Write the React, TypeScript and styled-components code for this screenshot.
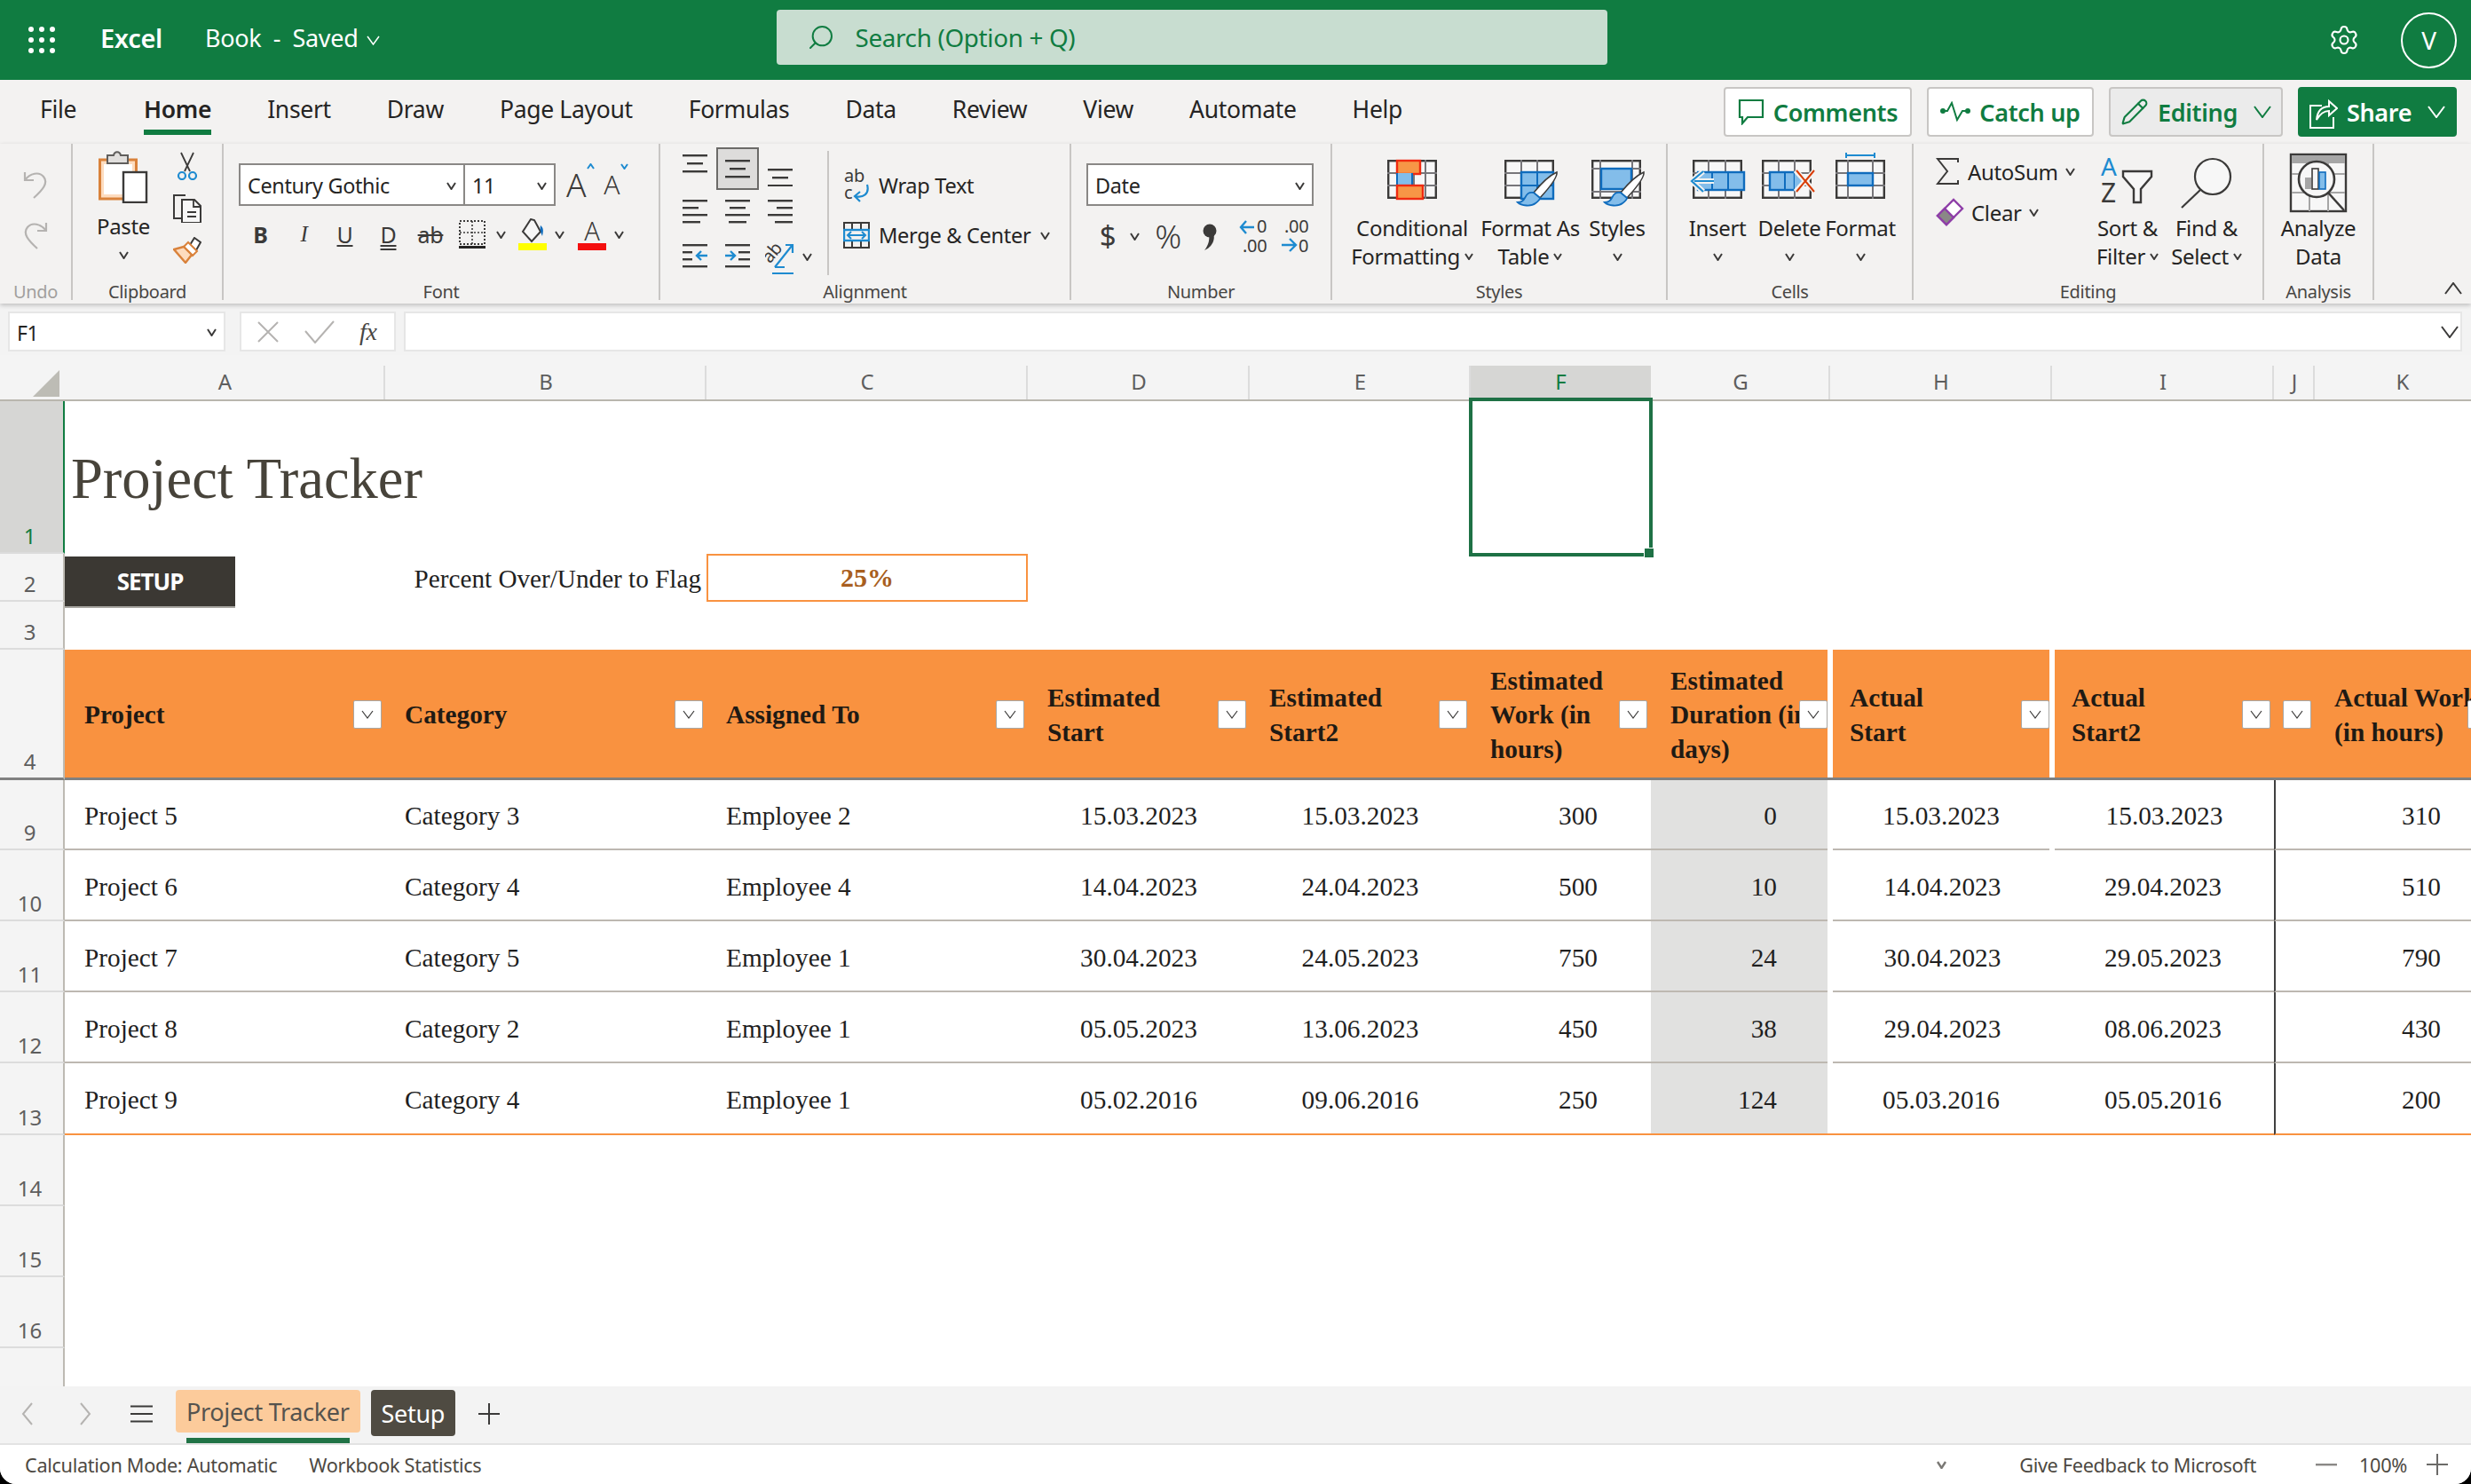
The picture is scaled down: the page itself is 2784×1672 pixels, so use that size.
import React, { FC, ReactNode } from 'react';
import styled, { createGlobalStyle } from 'styled-components';
import { Settings, Search, Pencil } from 'lucide-react';

const uiFont = '"Noto Sans", "Open Sans", sans-serif';
const sheetFont = '"Liberation Serif", serif';
const green = '#107c41';
const orange = '#f99240';

const GlobalStyle = createGlobalStyle`
    html, body {
        margin: 0;
        padding: 0;
        background: #000;
    }
    * {
        box-sizing: border-box;
    }
`;

const Page = styled.div`
    width: 2784px;
    height: 1672px;
    background: #fff;
    overflow: hidden;
    display: flex;
    flex-direction: column;
    font-family: ${uiFont};
    color: #252423;
    letter-spacing: -0.02em;
    border-radius: 0 0 18px 18px;
`;

/* title bar */
const TitleBar = styled.header`
    height: 90px;
    flex: none;
    background: ${green};
    color: #fff;
    display: flex;
    align-items: center;
    padding: 0 16px 0 32px;
`;

const Waffle = styled.div`
    width: 30px;
    display: grid;
    grid-template-columns: repeat(3, 6px);
    justify-content: space-between;
    row-gap: 6px;

    i {
        width: 6px;
        height: 6px;
        border-radius: 50%;
        background: #fff;
    }
`;

const AppName = styled.span`
    font-size: 29px;
    font-weight: 600;
    margin: 0 0 5px 51px;
`;

const DocName = styled.span`
    font-size: 27px;
    margin: 0 0 5px 48px;
    white-space: pre;
`;

const SearchBox = styled.div`
    width: 936px;
    height: 62px;
    margin: 0 0 6px 447px;
    background: #c8ddd0;
    border-radius: 4px;
    color: ${green};
    display: flex;
    align-items: center;
    gap: 22px;
    padding-left: 34px;
    font-size: 27.8px;

    svg {
        transform: scaleX(-1);
    }
`;

const TitleRight = styled.div`
    margin-left: auto;
    display: flex;
    align-items: center;
    gap: 46px;
`;

const Avatar = styled.div`
    width: 63px;
    height: 63px;
    border: 2px solid #fff;
    border-radius: 50%;
    display: flex;
    align-items: center;
    justify-content: center;
    font-size: 28px;
`;

/* tabs row */
const TabRow = styled.nav`
    height: 72px;
    flex: none;
    background: #f3f2f1;
    display: flex;
    padding: 0 16px 0 45px;
`;

const Tabs = styled.div`
    display: flex;
    gap: 63px;
`;

const Tab = styled.div<{ $active?: boolean }>`
    height: 62px;
    display: flex;
    align-items: center;
    font-size: 26.5px;
    font-weight: ${({ $active }) => ($active ? 600 : 400)};
    border-bottom: 6px solid ${({ $active }) => ($active ? green : 'transparent')};
    margin-left: ${({ $active }) => ($active ? '13px' : '0')};
    padding-top: 10px;
`;

const ActionRow = styled.div`
    margin-left: auto;
    padding-top: 8px;
    display: flex;
    gap: 17px;
`;

const ActionButton = styled.div<{ $w: number; $kind?: 'plain' | 'pressed' | 'solid' }>`
    width: ${({ $w }) => $w}px;
    height: 56px;
    border-radius: 4px;
    display: flex;
    align-items: center;
    justify-content: center;
    gap: 10px;
    font-size: 27px;
    font-weight: 600;
    color: ${({ $kind }) => ($kind === 'solid' ? '#fff' : green)};
    background: ${({ $kind }) => ($kind === 'solid' ? green : $kind === 'pressed' ? '#ebebeb' : '#fff')};
    border: 2px solid ${({ $kind }) => ($kind === 'solid' ? green : '#c8c6c4')};
`;

/* ribbon */
const Ribbon = styled.section`
    height: 180px;
    flex: none;
    background: #f3f2f1;
    display: flex;
    box-shadow: 0 2px 5px rgba(0, 0, 0, 0.22);
    position: relative;
    z-index: 2;
`;

const Group = styled.div<{ $w: number }>`
    width: ${({ $w }) => $w}px;
    height: 176px;
    flex: none;
    display: flex;
    flex-direction: column;
    border-right: 2px solid #c8c6c4;
`;

const GroupBody = styled.div<{ $pad?: string; $col?: boolean }>`
    flex: 1;
    min-height: 0;
    display: flex;
    flex-direction: ${({ $col }) => ($col ? 'column' : 'row')};
    padding: ${({ $pad }) => $pad || '0'};
`;

const GroupLabel = styled.div<{ $muted?: boolean }>`
    height: 18px;
    text-align: center;
    font-size: 20px;
    line-height: 18px;
    color: ${({ $muted }) => ($muted ? '#a19f9d' : '#484644')};
`;

const UndoStack = styled.div`
    width: 80px;
    display: flex;
    flex-direction: column;
    align-items: center;
    gap: 25px;
    padding-top: 30px;
`;

const PasteColumn = styled.div`
    width: 58px;
    margin-left: 28px;
    padding-top: 7px;
    display: flex;
    flex-direction: column;
    align-items: center;
`;

const PasteText = styled.span`
    font-size: 24px;
    line-height: 32px;
    margin-top: 10px;
`;

const ChevronLine = styled.div<{ $h?: number }>`
    height: ${({ $h }) => $h || 32}px;
    display: flex;
    align-items: center;
    justify-content: center;
`;

const ClipTools = styled.div`
    width: 40px;
    margin-left: 23px;
    padding-top: 9px;
    display: flex;
    flex-direction: column;
    align-items: center;
    gap: 16px;
`;

const SelectRow = styled.div`
    display: flex;
    align-items: center;
`;

const SelectBox = styled.div<{ $w: number; $joined?: boolean }>`
    width: ${({ $w }) => $w}px;
    height: 48px;
    border: 2px solid #8a8886;
    margin-left: ${({ $joined }) => ($joined ? '-2px' : '0')};
    background: #fff;
    display: flex;
    align-items: center;
    justify-content: space-between;
    padding: 2px 8px 0 8px;
    font-size: 23.4px;
`;

const SizeLetter = styled.span<{ $size: number; $ml: number }>`
    font-size: ${({ $size }) => $size}px;
    line-height: 48px;
    margin-left: ${({ $ml }) => $ml}px;
    display: inline-flex;
    align-items: flex-start;
    color: #3b3a39;
    font-weight: 300;
`;

const ToolRow = styled.div<{ $mt: number }>`
    display: flex;
    align-items: center;
    height: 32px;
    margin-top: ${({ $mt }) => $mt}px;
`;

const Slot = styled.div<{ $ml: number; $w?: number }>`
    margin-left: ${({ $ml }) => $ml}px;
    width: ${({ $w }) => ($w ? `${$w}px` : 'auto')};
    flex: none;
    display: flex;
    align-items: center;
    justify-content: center;
`;

const FormatLetter = styled.span<{ $b?: boolean; $i?: boolean; $deco?: string; $size?: number }>`
    font-family: ${({ $i }) => ($i ? sheetFont : uiFont)};
    font-size: ${({ $size }) => $size || 25}px;
    line-height: 32px;
    font-weight: ${({ $b }) => ($b ? 700 : 400)};
    font-style: ${({ $i }) => ($i ? 'italic' : 'normal')};
    text-decoration: ${({ $deco }) => $deco || 'none'};
    color: #3b3a39;
`;

const ColorLetter = styled.div<{ $bar: string }>`
    width: 32px;
    display: flex;
    flex-direction: column;
    align-items: center;
    font-size: 29px;
    line-height: 28px;
    font-weight: 300;
    color: #3b3a39;

    &::after {
        content: '';
        width: 32px;
        height: 8px;
        background: ${({ $bar }) => $bar};
    }
`;

const AlignGrid = styled.div`
    display: grid;
    grid-template-columns: 48px 48px 48px 29px;
    grid-template-rows: 48px 48px 52px;
    margin: 4px 0 0 15px;
    align-items: center;
    justify-items: center;
`;

const AlignCell = styled.div<{ $on?: boolean; $first?: boolean }>`
    width: 48px;
    height: 48px;
    grid-column: ${({ $first }) => ($first ? 1 : 'auto')};
    display: flex;
    align-items: center;
    justify-content: center;
    background: ${({ $on }) => ($on ? '#dddcdb' : 'transparent')};
    border: 2px solid ${({ $on }) => ($on ? '#6b6a68' : 'transparent')};
`;

const OrientChevron = styled.div`
    grid-column: 4;
    grid-row: 3;
    justify-self: start;
    margin-left: 1px;
`;

const InnerRule = styled.div`
    width: 2px;
    height: 140px;
    margin-top: 8px;
    background: #c8c6c4;
    flex: none;
`;

const WrapColumn = styled.div`
    margin-left: 16px;
    padding-top: 31px;
    display: flex;
    flex-direction: column;
    gap: 24px;
`;

const WrapRow = styled.div`
    display: flex;
    align-items: center;
    gap: 10px;
    height: 32px;
    font-size: 23.6px;
    white-space: nowrap;
`;

const BigButton = styled.div<{ $w: number; $ml?: number }>`
    width: ${({ $w }) => $w}px;
    margin-left: ${({ $ml }) => $ml || 0}px;
    flex: none;
    padding-top: 10px;
    display: flex;
    flex-direction: column;
    align-items: center;
    font-size: 24px;
    line-height: 32px;
    white-space: nowrap;
`;

const BigIcon = styled.div`
    height: 69px;
    display: flex;
    justify-content: center;

    svg {
        overflow: visible;
    }
`;

const BigLine = styled.div`
    height: 32px;
    display: flex;
    align-items: center;
    gap: 5px;
`;

const SumColumn = styled.div`
    width: 169px;
    margin-left: 25px;
    padding-top: 15px;
    display: flex;
    flex-direction: column;
    gap: 14px;
    flex: none;
`;

const SumRow = styled.div`
    height: 32px;
    display: flex;
    align-items: center;
    gap: 8px;
    font-size: 24px;
`;

const CollapseSlot = styled.div`
    flex: 1;
    height: 176px;
    display: flex;
    align-items: flex-end;
    justify-content: flex-end;
    padding: 0 10px 6px 0;
`;

/* formula bar */
const FormulaBar = styled.div`
    height: 58px;
    flex: none;
    background: #f3f3f3;
    display: flex;
    padding: 9px 10px 4px 9px;
    gap: 16px;
`;

const NameBox = styled.div`
    width: 245px;
    background: #fff;
    border: 2px solid #e6e6e6;
    display: flex;
    align-items: center;
    justify-content: space-between;
    padding: 2px 8px 0 8px;
    font-size: 23px;
`;

const FxBox = styled.div`
    width: 176px;
    margin-right: -7px;
    background: #fff;
    border: 2px solid #e6e6e6;
    display: flex;
    align-items: center;
    padding-left: 17px;
    gap: 28px;
`;

const FxText = styled.span`
    font-family: ${sheetFont};
    font-style: italic;
    font-size: 28px;
    color: #484644;
`;

const FormulaInput = styled.div`
    flex: 1;
    background: #fff;
    border: 2px solid #e6e6e6;
    display: flex;
    align-items: center;
    justify-content: flex-end;
    padding-right: 2px;
`;

/* sheet */
const columnWidths = [73, 361, 362, 362, 250, 249, 203, 202, 250, 250, 46, 198];
const rowHeights = [52, 172, 54, 54, 147, 79, 80, 80, 80, 81, 80, 80, 80, 43];

const Sheet = styled.main`
    flex: none;
    width: 2784px;
    height: 1162px;
    overflow: hidden;
    display: grid;
    grid-template-columns: ${columnWidths.map((w) => `${w}px`).join(' ')};
    grid-template-rows: ${rowHeights.map((h) => `${h}px`).join(' ')};
    font-family: ${sheetFont};
    letter-spacing: 0;
    position: relative;
`;

const Corner = styled.div`
    background: #f4f4f4;
    border-bottom: 2px solid #b9b6ae;
    display: flex;
    justify-content: flex-end;
    padding: 17px 6px 5px 0;
`;

const ColHead = styled.div<{ $on?: boolean }>`
    font-family: ${uiFont};
    font-size: 24px;
    color: ${({ $on }) => ($on ? green : '#5e5e5e')};
    padding-top: 9px;
    display: flex;
    align-items: center;
    justify-content: center;
    border-bottom: 2px solid #b9b6ae;
    background: ${({ $on }) =>
        $on
            ? 'linear-gradient(#d6d6d4, #d6d6d4) bottom / 100% 38px no-repeat, #f4f4f4'
            : 'linear-gradient(#dcdcdc, #dcdcdc) right bottom / 2px 38px no-repeat, #f4f4f4'};
`;

const RowHead = styled.div<{ $on?: boolean; $dark?: boolean; $fade?: boolean }>`
    grid-column: 1;
    font-family: ${uiFont};
    font-size: 24px;
    line-height: 30px;
    color: ${({ $on }) => ($on ? green : '#5e5e5e')};
    background: ${({ $on }) => ($on ? '#d6d6d4' : '#f4f4f4')};
    border-right: 2px solid ${({ $on }) => ($on ? green : '#bdbab3')};
    border-bottom: ${({ $dark, $fade }) =>
        $fade ? 'none' : $dark ? '3px solid #808080' : '2px solid #dcdcdc'};
    display: flex;
    align-items: flex-end;
    justify-content: center;
    padding: 0 4px 3px 0;
`;

const BlankCell = styled.div`
    min-width: 0;
    position: relative;
`;

const TitleCell = styled(BlankCell)`
    display: flex;
    align-items: center;
    padding: 4px 0 0 7px;
    font-size: 64.5px;
    color: #47433a;
    white-space: nowrap;
`;

const LabelCell = styled(BlankCell)`
    display: flex;
    align-items: center;
    justify-content: flex-end;
    padding: 2px 6px 0 0;
    font-size: 29.2px;
    color: #1f1f1f;
    white-space: nowrap;
`;

const FlagCell = styled(BlankCell)`
    border: 2px solid ${orange};
    display: flex;
    align-items: center;
    justify-content: center;
    font-size: 30px;
    font-weight: 700;
    color: #a85e20;
`;

const SetupShape = styled.div`
    position: absolute;
    left: 73px;
    top: 227px;
    width: 192px;
    height: 58px;
    background: #3b3833;
    border-bottom: 2px solid #a7a5a0;
    color: #fff;
    font-family: ${uiFont};
    font-weight: 700;
    font-size: 26px;
    letter-spacing: -1px;
    display: flex;
    align-items: center;
    justify-content: center;
    padding-bottom: 0;
    z-index: 2;
`;

const Selection = styled.div`
    position: absolute;
    inset: -4px -2px -3px -2px;
    border: 4px solid #1e7145;
    z-index: 3;

    &::after {
        content: '';
        position: absolute;
        right: -6px;
        bottom: -6px;
        width: 10px;
        height: 10px;
        background: #1e7145;
        border: 1px solid #fff;
    }
`;

const HeaderSlot = styled.div`
    display: flex;
    min-width: 0;
    border-bottom: 3px solid #808080;
`;

const HeaderCell = styled.div<{ $ml?: number; $mr?: number }>`
    flex: 1;
    min-width: 0;
    background: ${orange};
    margin: 0 ${({ $mr }) => $mr || 0}px 0 ${({ $ml }) => $ml || 0}px;
    position: relative;
    display: flex;
    align-items: center;
    padding: 3px 0 0 ${({ $ml }) => 22 - ($ml || 0)}px;
    font-size: 29.3px;
    line-height: 38.5px;
    font-weight: 700;
    color: #1f1a14;
    white-space: nowrap;
    overflow: hidden;
`;

const FilterButton = styled.div<{ $right: number }>`
    position: absolute;
    top: 57px;
    right: ${({ $right }) => $right}px;
    width: 32px;
    height: 32px;
    background: #fff;
    border: 1px solid #a9a7a4;
    border-radius: 2px;
    display: flex;
    align-items: center;
    justify-content: center;
`;

const DataCell = styled.div<{
    $align: 'left' | 'center' | 'right';
    $fill?: 'full' | 'trim';
    $last?: boolean;
    $rule?: boolean;
    $ml?: number;
    $mr?: number;
    $pr?: number;
}>`
    display: flex;
    align-items: center;
    justify-content: ${({ $align }) =>
        $align === 'left' ? 'flex-start' : $align === 'right' ? 'flex-end' : 'center'};
    padding: ${({ $align, $pr }) =>
        $align === 'left' ? '4px 0 0 22px' : $align === 'right' ? `4px ${$pr || 60}px 0 0` : '4px 0 0 0'};
    margin: 0 ${({ $mr }) => $mr || 0}px 0 ${({ $ml }) => $ml || 0}px;
    font-size: 29.3px;
    color: #1f1f1f;
    background: ${({ $fill }) =>
        $fill === 'full'
            ? '#e1e1e0'
            : $fill === 'trim'
              ? 'linear-gradient(to right, #e1e1e0 calc(100% - 3px), transparent 0)'
              : 'transparent'};
    border-bottom: 2px solid ${({ $last }) => ($last ? orange : '#bdb8b1')};
    border-left: ${({ $rule }) => ($rule ? '2px solid #404040' : '0')};
`;

/* sheet tabs */
const TabBar = styled.div`
    height: 66px;
    flex: none;
    background: #f3f3f3;
    border-bottom: 2px solid #e3e3e3;
    display: flex;
    align-items: flex-start;
    padding: 4px 0 0 24px;
`;

const NavSlot = styled.div<{ $w: number; $ml?: number; $center?: boolean }>`
    width: ${({ $w }) => $w}px;
    height: 54px;
    margin-left: ${({ $ml }) => $ml || 0}px;
    display: flex;
    align-items: center;
    justify-content: ${({ $center }) => ($center ? 'center' : 'flex-start')};
`;

const SheetTab = styled.div<{ $dark?: boolean }>`
    height: ${({ $dark }) => ($dark ? 52 : 48)}px;
    padding: 0 12px;
    border-radius: 4px;
    display: flex;
    align-items: center;
    font-size: 27px;
    color: ${({ $dark }) => ($dark ? '#fff' : '#55534e')};
    background: ${({ $dark }) => ($dark ? '#4f4b42' : '#fccb9b')};
    margin-left: ${({ $dark }) => ($dark ? '12px' : '0')};
    position: relative;

    ${({ $dark }) =>
        !$dark &&
        `&::after {
            content: '';
            position: absolute;
            left: 12px;
            right: 12px;
            top: 54px;
            height: 6px;
            background: #217346;
        }`}
`;

const StatusBar = styled.footer`
    flex: 1;
    background: #fff;
    display: flex;
    align-items: center;
    padding: 0 26px 0 28px;
    font-size: 21.7px;
    color: #4d4942;
`;

const StatusRight = styled.div`
    margin-left: auto;
    display: flex;
    align-items: center;
`;

const Chevron: FC<{ w?: number; color?: string; sw?: number; up?: boolean }> = ({
    w = 11,
    color = '#3b3a39',
    sw = 2,
    up,
}) => (
    <svg width={w} height={Math.round(w * 0.6) + 2} viewBox={`0 0 ${w} ${Math.round(w * 0.6) + 2}`} style={{ flex: 'none' }}>
        <polyline
            points={
                up
                    ? `1,${Math.round(w * 0.6) + 1} ${w / 2},1 ${w - 1},${Math.round(w * 0.6) + 1}`
                    : `1,1 ${w / 2},${Math.round(w * 0.6) + 1} ${w - 1},1`
            }
            fill="none"
            stroke={color}
            strokeWidth={sw}
        />
    </svg>
);

const AlignLines: FC<{ top: number; widths: [number, number, number]; gap?: number; side?: 'l' | 'c' | 'r' }> = ({
    top,
    widths,
    gap = 9,
    side = 'c',
}) => (
    <svg width="28" height="40" viewBox="0 0 28 40">
        {widths.map((w, i) => (
            <rect
                key={i}
                x={side === 'l' ? 0 : side === 'r' ? 28 - w : (28 - w) / 2}
                y={top + i * gap}
                width={w}
                height="2.4"
                fill="#3b3a39"
            />
        ))}
    </svg>
);

const BlockLines: FC<{ widths: number[]; side: 'l' | 'c' | 'r' }> = ({ widths, side }) => (
    <svg width="28" height="28" viewBox="0 0 28 28">
        {widths.map((w, i) => (
            <rect
                key={i}
                x={side === 'l' ? 0 : side === 'r' ? 28 - w : (28 - w) / 2}
                y={1 + i * 8}
                width={w}
                height="2.4"
                fill="#3b3a39"
            />
        ))}
    </svg>
);

const IndentIcon: FC<{ flip?: boolean }> = ({ flip }) => (
    <svg width="28" height="28" viewBox="0 0 28 28">
        <rect x="0" y="1" width="28" height="2.4" fill="#3b3a39" />
        <rect x="0" y="25" width="28" height="2.4" fill="#3b3a39" />
        {flip ? (
            <>
                <rect x="15" y="9" width="13" height="2.4" fill="#3b3a39" />
                <rect x="15" y="17" width="13" height="2.4" fill="#3b3a39" />
                <path d="M0 14H10M6 9l5 5-5 5" stroke="#1e8bd0" strokeWidth="2.4" fill="none" />
            </>
        ) : (
            <>
                <rect x="0" y="9" width="11" height="2.4" fill="#3b3a39" />
                <rect x="0" y="17" width="11" height="2.4" fill="#3b3a39" />
                <path d="M28 14H17M21 9l-5 5 5 5" stroke="#1e8bd0" strokeWidth="2.4" fill="none" />
            </>
        )}
    </svg>
);

const TableBase: FC<{ w?: number; x?: number; y?: number; cols: number[]; rows: number[]; children?: ReactNode; total?: number }> = ({
    w = 56,
    x = 0,
    y = 8,
    cols,
    rows,
    children,
    total = 68,
}) => (
    <svg width={total} height="68" viewBox={`0 0 ${total} 68`}>
        <rect x={x + 1.2} y={y + 1.2} width={w - 2.4} height="41.6" fill="#f7f7f7" stroke="#3b3a39" strokeWidth="2.4" />
        {cols.map((c) => (
            <line key={c} x1={x + c} x2={x + c} y1={y} y2={y + 44} stroke="#77767a" strokeWidth="2" />
        ))}
        {rows.map((r) => (
            <line key={r} y1={y + r} y2={y + r} x1={x} x2={x + w} stroke="#77767a" strokeWidth="2" />
        ))}
        {children}
    </svg>
);

const Brush: FC = () => (
    <g>
        <path d="M33 45C42 34 50 26 59 22C60 28 52 38 40 51Z" fill="#fff" stroke="#3b3a39" strokeWidth="1.6" />
        <path d="M33 45C27 44 25 47 23 51C21 55 18 56 15 56C19 60 30 61 35 57C39 54 40 52 40 51Z" fill="#83bdea" stroke="#0f6cbd" strokeWidth="1.8" />
    </g>
);

const PageIcons = {
    undo: (flip?: boolean) => (
        <svg width="28" height="32" viewBox="0 0 28 32" style={flip ? { transform: 'scaleX(-1)' } : undefined}>
            <path d="M2 2V11H12M2 11C8 3 18 1 23 7C29 14 22 22 12 31" fill="none" stroke="#b5b3b1" strokeWidth="2.2" />
        </svg>
    ),
    paste: (
        <svg width="56" height="60" viewBox="0 0 56 60">
            <rect x="1.5" y="11" width="41" height="44" fill="#fddcbf" stroke="#d9823b" strokeWidth="3" />
            <rect x="6" y="16" width="32" height="34" fill="#fff" />
            <path d="M10 15V6H17C18 1 24 1 25 6H33V15Z" fill="#e1dfdd" stroke="#605e5c" strokeWidth="2" />
            <rect x="28" y="25" width="26" height="34" fill="#fff" stroke="#3b3a39" strokeWidth="2.4" />
        </svg>
    ),
    cut: (
        <svg width="24" height="32" viewBox="0 0 24 32">
            <path d="M5 1L15 22M19 1L9 22" stroke="#3b3a39" strokeWidth="1.8" fill="none" />
            <circle cx="6" cy="27" r="4" fill="none" stroke="#1e8bd0" strokeWidth="2.2" />
            <circle cx="18" cy="27" r="4" fill="none" stroke="#1e8bd0" strokeWidth="2.2" />
        </svg>
    ),
    copy: (
        <svg width="32" height="32" viewBox="0 0 32 32">
            <path d="M10 27H1V1H14" fill="none" stroke="#3b3a39" strokeWidth="2" />
            <path d="M10 6H24L31 13V32H10Z" fill="#f7f7f7" stroke="#3b3a39" strokeWidth="2" />
            <path d="M23 6V14H31M16 20H26M16 25H26" stroke="#3b3a39" strokeWidth="1.8" fill="none" />
        </svg>
    ),
    painter: (
        <svg width="32" height="30" viewBox="0 0 32 30">
            <path d="M19 9L24 1L31 6L26 15Z" fill="#fff" stroke="#3b3a39" strokeWidth="2" />
            <path d="M17 6L27 16L22 21L12 11Z" fill="#fff" stroke="#d9823b" strokeWidth="2" />
            <path d="M12 11L1 14L14 29L21 20Z" fill="#fddcbf" stroke="#d9823b" strokeWidth="2.4" />
        </svg>
    ),
    borders: (
        <svg width="30" height="32" viewBox="0 0 30 32">
            <rect x="1" y="1" width="28" height="26" fill="none" stroke="#3b3a39" strokeWidth="2" strokeDasharray="2 2" />
            <path d="M15 1V27M1 14H29" stroke="#3b3a39" strokeWidth="1.6" strokeDasharray="2 2" />
            <rect x="0" y="29" width="30" height="3" fill="#252423" />
        </svg>
    ),
    fill: (
        <svg width="32" height="36" viewBox="0 0 32 36">
            <path d="M14 1L5 15L15 26L25 15L18 2Z" fill="#f7f7f7" stroke="#3b3a39" strokeWidth="2" />
            <path d="M25 8C29 11 28 15 27 20C25 16 24 12 25 8Z" fill="#0f6cbd" />
            <rect x="0" y="28" width="32" height="8" fill="#ffff00" />
        </svg>
    ),
    wrap: (
        <svg width="30" height="44" viewBox="0 0 30 44">
            <text x="1" y="18" fontFamily={uiFont} fontSize="20" fill="#3b3a39">ab</text>
            <text x="1" y="37" fontFamily={uiFont} fontSize="20" fill="#3b3a39">c</text>
            <path d="M27 21C30 32 22 36 14 34M19 29L13 34L19 40" fill="none" stroke="#1e8bd0" strokeWidth="2.2" />
        </svg>
    ),
    merge: (
        <svg width="30" height="30" viewBox="0 0 30 30">
            <rect x="1" y="1" width="28" height="28" fill="none" stroke="#3b3a39" strokeWidth="2" />
            <path d="M10 1V29M20 1V29" stroke="#3b3a39" strokeWidth="2" />
            <rect x="1" y="9" width="28" height="12" fill="#f3f2f1" stroke="#1e8bd0" strokeWidth="2.4" />
            <path d="M5 15H25M9 11L5 15L9 19M21 11L25 15L21 19" fill="none" stroke="#1e8bd0" strokeWidth="2" />
        </svg>
    ),
    orient: (
        <svg width="34" height="46" viewBox="0 0 34 46">
            <text x="-4" y="24" fontFamily={uiFont} fontSize="20" fill="#3b3a39" transform="rotate(-50 10 18)">ab</text>
            <path d="M11 36L30 12M23 11H31V20M11 36H22M8 43H32" fill="none" stroke="#1e8bd0" strokeWidth="2.2" />
        </svg>
    ),
    comma: (
        <svg width="20" height="34" viewBox="0 0 20 34">
            <circle cx="11" cy="11" r="7.5" fill="#3b3a39" />
            <path d="M14 12C19 20 13 30 5 33C10 27 11 20 10 15Z" fill="#3b3a39" />
        </svg>
    ),
    incDecimal: (
        <svg width="32" height="44" viewBox="0 0 32 44">
            <path d="M17 12H2M8 5L2 12L8 19" fill="none" stroke="#1e8bd0" strokeWidth="2.4" />
            <text x="20" y="18" fontFamily={uiFont} fontSize="20" fill="#3b3a39">0</text>
            <text x="4" y="40" fontFamily={uiFont} fontSize="20" fill="#3b3a39">.00</text>
        </svg>
    ),
    decDecimal: (
        <svg width="32" height="44" viewBox="0 0 32 44">
            <text x="4" y="18" fontFamily={uiFont} fontSize="20" fill="#3b3a39">.00</text>
            <path d="M1 32H16M10 25L17 32L10 39" fill="none" stroke="#1e8bd0" strokeWidth="2.4" />
            <text x="20" y="40" fontFamily={uiFont} fontSize="20" fill="#3b3a39">0</text>
        </svg>
    ),
    sigma: (
        <svg width="26" height="30" viewBox="0 0 26 30">
            <path d="M25 5V1H2L13 15L2 29H25V25" fill="none" stroke="#3b3a39" strokeWidth="2" />
        </svg>
    ),
    eraser: (
        <svg width="32" height="32" viewBox="0 0 32 32">
            <path d="M2 20L20 2L30 12L12 30Z" fill="#fff" stroke="#8e3ea8" strokeWidth="2.4" />
            <path d="M2 20L10 12L20 22L12 30Z" fill="#8a8886" stroke="#8e3ea8" strokeWidth="2.4" />
        </svg>
    ),
};

const CondIcon = (
    <TableBase w={56} cols={[11, 30, 43]} rows={[15, 29]} total={56}>
        <rect x="11" y="9" width="26" height="15" fill="#f79646" stroke="#f02a10" strokeWidth="2.4" />
        <rect x="11" y="23" width="17" height="14" fill="#83bdea" />
        <path d="M28 23V37" stroke="#0f6cbd" strokeWidth="2" />
        <path d="M11 23V37" stroke="#0f6cbd" strokeWidth="2" />
        <rect x="11" y="37" width="29" height="15" fill="#f79646" stroke="#f02a10" strokeWidth="2.4" />
    </TableBase>
);

const FormatTableIcon = (
    <TableBase w={56} cols={[19, 37]} rows={[15, 29]} total={58}>
        <rect x="19" y="22" width="36" height="30" fill="#83bdea" stroke="#0f6cbd" strokeWidth="2.4" />
        <path d="M37 22V52M19 37H55" stroke="#0f6cbd" strokeWidth="2" />
        <Brush />
    </TableBase>
);

const StylesIcon = (
    <TableBase w={56} cols={[10, 46]} rows={[10, 36]} total={58}>
        <rect x="11" y="18" width="34" height="23" fill="#83bdea" stroke="#0f6cbd" strokeWidth="2.4" />
        <Brush />
    </TableBase>
);

const InsertIcon = (
    <TableBase w={56} x={4} cols={[18, 37]} rows={[15, 29]} total={64}>
        <rect x="10" y="22" width="52" height="20" fill="#83bdea" stroke="#0f6cbd" strokeWidth="2.4" />
        <path d="M26 22V42M44 22V42" stroke="#0f6cbd" strokeWidth="2" />
        <path d="M28 32H6M16 21L3 32L16 44" fill="none" stroke="#f3f2f1" strokeWidth="6" />
        <path d="M28 32H6M16 21L3 32L16 44" fill="none" stroke="#1e8bd0" strokeWidth="2.2" />
    </TableBase>
);

const DeleteIcon = (
    <TableBase w={56} cols={[19, 37]} rows={[15, 29]} total={62}>
        <rect x="9" y="22" width="28" height="20" fill="#83bdea" stroke="#0f6cbd" strokeWidth="2.4" />
        <path d="M37 22H40L50 32L40 42H37Z" fill="#83bdea" />
        <path d="M26 22V42" stroke="#0f6cbd" strokeWidth="2" />
        <path d="M38 20L60 44M60 20L38 44" stroke="#f3f2f1" strokeWidth="6" />
        <path d="M39 20L59 44M59 20L39 44" stroke="#d83b01" strokeWidth="2" />
    </TableBase>
);

const FormatIcon = (
    <TableBase w={56} cols={[14, 42]} rows={[15, 29]} total={56}>
        <rect x="14" y="23" width="28" height="14" fill="#83bdea" stroke="#0f6cbd" strokeWidth="2.4" />
        <path d="M12 3H44M12 0V6M44 0V6" stroke="#1e8bd0" strokeWidth="2" fill="none" />
    </TableBase>
);

const SortIcon = (
    <svg width="60" height="68" viewBox="0 0 60 68">
        <text x="0" y="26" fontFamily={uiFont} fontSize="28" fill="#1e8bd0">A</text>
        <text x="0" y="56" fontFamily={uiFont} fontSize="30" fill="#3b3a39">Z</text>
        <path d="M25 21H57V27L45 41V56H37V41L25 27Z" fill="#f7f7f7" stroke="#3b3a39" strokeWidth="2.4" />
    </svg>
);

const FindIcon = (
    <svg width="60" height="68" viewBox="0 0 60 68">
        <circle cx="37" cy="27" r="20" fill="#f7f7f7" stroke="#3b3a39" strokeWidth="2.2" />
        <path d="M23 42L2 62" stroke="#3b3a39" strokeWidth="2.2" />
    </svg>
);

const AnalyzeIcon = (
    <svg width="66" height="68" viewBox="0 0 66 68">
        <rect x="2" y="2" width="62" height="64" fill="#f7f7f7" stroke="#3b3a39" strokeWidth="2.4" />
        <rect x="3" y="3" width="60" height="9" fill="#a6a6a6" />
        <path d="M3 24H63M3 45H63M23 12V66M44 12V66" stroke="#a6a6a6" strokeWidth="2" />
        <circle cx="31" cy="30" r="20" fill="#f7f7f7" stroke="#3b3a39" strokeWidth="2.6" />
        <rect x="18" y="28" width="7" height="13" fill="#a6a6a6" />
        <rect x="26" y="18" width="7" height="23" fill="#f7f7f7" stroke="#3b3a39" strokeWidth="1.6" />
        <rect x="34" y="22" width="7" height="19" fill="#83bdea" stroke="#0f6cbd" strokeWidth="1.6" />
        <path d="M44 45L62 65" stroke="#3b3a39" strokeWidth="2.6" />
    </svg>
);

const columns = ['A', 'B', 'C', 'D', 'E', 'F', 'G', 'H', 'I', 'J', 'K'];

type Head = { lines: string[]; ml?: number; mr?: number; filter: number };

const headers: Head[] = [
    { lines: ['Project'], filter: 4 },
    { lines: ['Category'], filter: 4 },
    { lines: ['Assigned To'], filter: 4 },
    { lines: ['Estimated', 'Start'], filter: 4 },
    { lines: ['Estimated', 'Start2'], filter: 4 },
    { lines: ['Estimated', 'Work (in', 'hours)'], filter: 4 },
    { lines: ['Estimated', 'Duration (in', 'days)'], mr: 3, filter: 0 },
    { lines: ['Actual', 'Start'], ml: 3, mr: 3, filter: 0 },
    { lines: ['Actual', 'Start2'], ml: 3, filter: 4 },
    { lines: [''], filter: 4 },
    { lines: ['Actual Work', '(in hours)'], filter: -6 },
];

const rows = [
    { n: 9, p: 'Project 5', c: 'Category 3', a: 'Employee 2', d: '15.03.2023', e: '15.03.2023', w: '300', g: '0', h: '15.03.2023', i: '15.03.2023', k: '310' },
    { n: 10, p: 'Project 6', c: 'Category 4', a: 'Employee 4', d: '14.04.2023', e: '24.04.2023', w: '500', g: '10', h: '14.04.2023', i: '29.04.2023', k: '510' },
    { n: 11, p: 'Project 7', c: 'Category 5', a: 'Employee 1', d: '30.04.2023', e: '24.05.2023', w: '750', g: '24', h: '30.04.2023', i: '29.05.2023', k: '790' },
    { n: 12, p: 'Project 8', c: 'Category 2', a: 'Employee 1', d: '05.05.2023', e: '13.06.2023', w: '450', g: '38', h: '29.04.2023', i: '08.06.2023', k: '430' },
    { n: 13, p: 'Project 9', c: 'Category 4', a: 'Employee 1', d: '05.02.2016', e: '09.06.2016', w: '250', g: '124', h: '05.03.2016', i: '05.05.2016', k: '200' },
];

const App: FC = () => (
    <Page>
        <GlobalStyle />
        <TitleBar>
            <Waffle>
                {Array.from({ length: 9 }).map((_, i) => (
                    <i key={i} />
                ))}
            </Waffle>
            <AppName>Excel</AppName>
            <DocName>Book  -  Saved</DocName>
            <Slot $ml={10}>
                <Chevron w={15} color="#fff" sw={1.5} />
            </Slot>
            <SearchBox>
                <Search size={32} strokeWidth={1.5} />
                Search (Option + Q)
            </SearchBox>
            <TitleRight>
                <Settings size={36} strokeWidth={1.4} />
                <Avatar>V</Avatar>
            </TitleRight>
        </TitleBar>

        <TabRow>
            <Tabs>
                <Tab>File</Tab>
                <Tab $active>Home</Tab>
                <Tab>Insert</Tab>
                <Tab>Draw</Tab>
                <Tab>Page Layout</Tab>
                <Tab>Formulas</Tab>
                <Tab>Data</Tab>
                <Tab>Review</Tab>
                <Tab>View</Tab>
                <Tab>Automate</Tab>
                <Tab>Help</Tab>
            </Tabs>
            <ActionRow>
                <ActionButton $w={212}>
                    <svg width="30" height="30" viewBox="0 0 30 30">
                        <path d="M2 2H28V21H11L5 28V21H2Z" fill="none" stroke={green} strokeWidth="2.2" />
                    </svg>
                    Comments
                </ActionButton>
                <ActionButton $w={188}>
                    <svg width="34" height="24" viewBox="0 0 34 24">
                        <path d="M3 11H8L13 2L19 21L25 11H31" fill="none" stroke={green} strokeWidth="2" />
                        <circle cx="3" cy="11" r="3" fill={green} />
                        <circle cx="31" cy="11" r="3" fill={green} />
                    </svg>
                    Catch up
                </ActionButton>
                <ActionButton $w={196} $kind="pressed">
                    <Pencil size={32} strokeWidth={1.6} />
                    Editing
                    <Slot $ml={8}>
                        <Chevron w={20} color={green} />
                    </Slot>
                </ActionButton>
                <ActionButton $w={179} $kind="solid">
                    <svg width="32" height="38" viewBox="0 0 32 38">
                        <path d="M14 12H1V37H27V25" fill="none" stroke="#fff" strokeWidth="2" />
                        <path d="M8 28C9 17 15 13 22 13V7L31 15L22 23V18C16 18 12 21 8 28Z" fill="none" stroke="#fff" strokeWidth="2" />
                    </svg>
                    Share
                    <Slot $ml={8}>
                        <Chevron w={20} color="#fff" />
                    </Slot>
                </ActionButton>
            </ActionRow>
        </TabRow>

        <Ribbon>
            <Group $w={82}>
                <GroupBody>
                    <UndoStack>
                        {PageIcons.undo()}
                        {PageIcons.undo(true)}
                    </UndoStack>
                </GroupBody>
                <GroupLabel $muted>Undo</GroupLabel>
            </Group>

            <Group $w={170}>
                <GroupBody>
                    <PasteColumn>
                        {PageIcons.paste}
                        <PasteText>Paste</PasteText>
                        <ChevronLine>
                            <Chevron />
                        </ChevronLine>
                    </PasteColumn>
                    <ClipTools>
                        {PageIcons.cut}
                        {PageIcons.copy}
                        {PageIcons.painter}
                    </ClipTools>
                </GroupBody>
                <GroupLabel>Clipboard</GroupLabel>
            </Group>

            <Group $w={492}>
                <GroupBody $col $pad="22px 0 0 17px">
                    <SelectRow>
                        <SelectBox $w={255}>
                            Century Gothic
                            <Chevron />
                        </SelectBox>
                        <SelectBox $w={104} $joined>
                            11
                            <Chevron />
                        </SelectBox>
                        <SizeLetter $size={37} $ml={12}>
                            A
                            <Slot $ml={1}>
                                <Chevron w={9} color="#1e8bd0" up />
                            </Slot>
                        </SizeLetter>
                        <SizeLetter $size={30} $ml={10}>
                            A
                            <Slot $ml={1}>
                                <Chevron w={9} color="#1e8bd0" />
                            </Slot>
                        </SizeLetter>
                    </SelectRow>
                    <ToolRow $mt={16}>
                        <Slot $ml={17} $w={15}>
                            <FormatLetter $b>B</FormatLetter>
                        </Slot>
                        <Slot $ml={34} $w={15}>
                            <FormatLetter $i>I</FormatLetter>
                        </Slot>
                        <Slot $ml={29} $w={19}>
                            <FormatLetter $deco="underline">U</FormatLetter>
                        </Slot>
                        <Slot $ml={30} $w={19}>
                            <FormatLetter $deco="underline double">D</FormatLetter>
                        </Slot>
                        <Slot $ml={23} $w={30}>
                            <FormatLetter $deco="line-through">ab</FormatLetter>
                        </Slot>
                        <Slot $ml={17}>{PageIcons.borders}</Slot>
                        <Slot $ml={12}>
                            <Chevron />
                        </Slot>
                        <Slot $ml={14}>{PageIcons.fill}</Slot>
                        <Slot $ml={9}>
                            <Chevron />
                        </Slot>
                        <Slot $ml={15}>
                            <ColorLetter $bar="#f40f0f">A</ColorLetter>
                        </Slot>
                        <Slot $ml={9}>
                            <Chevron />
                        </Slot>
                    </ToolRow>
                </GroupBody>
                <GroupLabel>Font</GroupLabel>
            </Group>

            <Group $w={463}>
                <GroupBody>
                    <AlignGrid>
                        <AlignCell>
                            <AlignLines top={4} widths={[28, 18, 28]} />
                        </AlignCell>
                        <AlignCell $on>
                            <AlignLines top={10} widths={[28, 18, 28]} />
                        </AlignCell>
                        <AlignCell>
                            <AlignLines top={20} widths={[28, 18, 28]} />
                        </AlignCell>
                        <AlignCell $first>
                            <BlockLines widths={[28, 18, 28, 20]} side="l" />
                        </AlignCell>
                        <AlignCell>
                            <BlockLines widths={[28, 18, 28, 20]} side="c" />
                        </AlignCell>
                        <AlignCell>
                            <BlockLines widths={[28, 18, 28, 20]} side="r" />
                        </AlignCell>
                        <AlignCell $first>
                            <IndentIcon />
                        </AlignCell>
                        <AlignCell>
                            <IndentIcon flip />
                        </AlignCell>
                        <AlignCell>{PageIcons.orient}</AlignCell>
                        <OrientChevron>
                            <Chevron />
                        </OrientChevron>
                    </AlignGrid>
                    <InnerRule />
                    <WrapColumn>
                        <WrapRow>
                            {PageIcons.wrap}
                            Wrap Text
                        </WrapRow>
                        <WrapRow>
                            {PageIcons.merge}
                            Merge &amp; Center
                            <Slot $ml={1}>
                                <Chevron />
                            </Slot>
                        </WrapRow>
                    </WrapColumn>
                </GroupBody>
                <GroupLabel>Alignment</GroupLabel>
            </Group>

            <Group $w={294}>
                <GroupBody $col $pad="22px 0 0 17px">
                    <SelectBox $w={256}>
                        Date
                        <Chevron />
                    </SelectBox>
                    <ToolRow $mt={18}>
                        <Slot $ml={16} $w={16}>
                            <FormatLetter $size={33}>$</FormatLetter>
                        </Slot>
                        <Slot $ml={17} $w={11}>
                            <Chevron />
                        </Slot>
                        <Slot $ml={17} $w={30}>
                            <SizeLetter $size={37} $ml={0}>%</SizeLetter>
                        </Slot>
                        <Slot $ml={21} $w={20}>{PageIcons.comma}</Slot>
                        <Slot $ml={24} $w={32}>{PageIcons.incDecimal}</Slot>
                        <Slot $ml={15} $w={32}>{PageIcons.decDecimal}</Slot>
                    </ToolRow>
                </GroupBody>
                <GroupLabel>Number</GroupLabel>
            </Group>

            <Group $w={378}>
                <GroupBody $pad="0 0 0 28px">
                    <BigButton $w={124}>
                        <BigIcon>{CondIcon}</BigIcon>
                        <BigLine>Conditional</BigLine>
                        <BigLine>
                            Formatting
                            <Chevron w={10} />
                        </BigLine>
                    </BigButton>
                    <BigButton $w={120} $ml={11}>
                        <BigIcon>{FormatTableIcon}</BigIcon>
                        <BigLine>Format As</BigLine>
                        <BigLine>
                            Table
                            <Chevron w={10} />
                        </BigLine>
                    </BigButton>
                    <BigButton $w={64} $ml={6}>
                        <BigIcon>{StylesIcon}</BigIcon>
                        <BigLine>Styles</BigLine>
                        <BigLine>
                            <Chevron />
                        </BigLine>
                    </BigButton>
                </GroupBody>
                <GroupLabel>Styles</GroupLabel>
            </Group>

            <Group $w={277}>
                <GroupBody $pad="0 0 0 16px">
                    <BigButton $w={80}>
                        <BigIcon>{InsertIcon}</BigIcon>
                        <BigLine>Insert</BigLine>
                        <BigLine>
                            <Chevron />
                        </BigLine>
                    </BigButton>
                    <BigButton $w={80} $ml={1}>
                        <BigIcon>{DeleteIcon}</BigIcon>
                        <BigLine>Delete</BigLine>
                        <BigLine>
                            <Chevron />
                        </BigLine>
                    </BigButton>
                    <BigButton $w={80}>
                        <BigIcon>{FormatIcon}</BigIcon>
                        <BigLine>Format</BigLine>
                        <BigLine>
                            <Chevron />
                        </BigLine>
                    </BigButton>
                </GroupBody>
                <GroupLabel>Cells</GroupLabel>
            </Group>

            <Group $w={395}>
                <GroupBody>
                    <SumColumn>
                        <SumRow>
                            {PageIcons.sigma}
                            <Slot $ml={2}>AutoSum</Slot>
                            <Slot $ml={0}>
                                <Chevron />
                            </Slot>
                        </SumRow>
                        <SumRow>
                            {PageIcons.eraser}
                            <span>Clear</span>
                            <Slot $ml={0}>
                                <Chevron />
                            </Slot>
                        </SumRow>
                    </SumColumn>
                    <BigButton $w={90} $ml={2}>
                        <BigIcon>{SortIcon}</BigIcon>
                        <BigLine>Sort &amp;</BigLine>
                        <BigLine>
                            Filter
                            <Chevron w={10} />
                        </BigLine>
                    </BigButton>
                    <BigButton $w={88}>
                        <BigIcon>{FindIcon}</BigIcon>
                        <BigLine>Find &amp;</BigLine>
                        <BigLine>
                            Select
                            <Chevron w={10} />
                        </BigLine>
                    </BigButton>
                </GroupBody>
                <GroupLabel>Editing</GroupLabel>
            </Group>

            <Group $w={124}>
                <GroupBody>
                    <BigButton $w={122}>
                        <BigIcon>{AnalyzeIcon}</BigIcon>
                        <BigLine>Analyze</BigLine>
                        <BigLine>Data</BigLine>
                    </BigButton>
                </GroupBody>
                <GroupLabel>Analysis</GroupLabel>
            </Group>

            <CollapseSlot>
                <Chevron w={20} up />
            </CollapseSlot>
        </Ribbon>

        <FormulaBar>
            <NameBox>
                F1
                <Chevron />
            </NameBox>
            <FxBox>
                <svg width="26" height="26" viewBox="0 0 26 26">
                    <path d="M2 2L24 24M24 2L2 24" stroke="#b5b3b1" strokeWidth="2" />
                </svg>
                <svg width="34" height="26" viewBox="0 0 34 26">
                    <path d="M1 12L12 25L33 1" fill="none" stroke="#b5b3b1" strokeWidth="2" />
                </svg>
                <FxText>fx</FxText>
            </FxBox>
            <FormulaInput>
                <Chevron w={20} />
            </FormulaInput>
        </FormulaBar>

        <Sheet>
            <Corner>
                <svg width="30" height="30" viewBox="0 0 30 30">
                    <path d="M30 0V30H0Z" fill="#bdbcb5" />
                </svg>
            </Corner>
            {columns.map((c) => (
                <ColHead key={c} $on={c === 'F'}>
                    {c}
                </ColHead>
            ))}

            <RowHead $on>1</RowHead>
            <TitleCell>Project Tracker</TitleCell>
            <BlankCell />
            <BlankCell />
            <BlankCell />
            <BlankCell />
            <BlankCell>
                <Selection />
            </BlankCell>
            <BlankCell />
            <BlankCell />
            <BlankCell />
            <BlankCell />
            <BlankCell />

            <RowHead>2</RowHead>
            <BlankCell />
            <LabelCell>Percent Over/Under to Flag</LabelCell>
            <FlagCell>25%</FlagCell>
            {Array.from({ length: 8 }).map((_, i) => (
                <BlankCell key={i} />
            ))}

            <RowHead>3</RowHead>
            {Array.from({ length: 11 }).map((_, i) => (
                <BlankCell key={i} />
            ))}

            <RowHead $dark>4</RowHead>
            {headers.map((h, i) => (
                <HeaderSlot key={i}>
                    <HeaderCell $ml={h.ml} $mr={h.mr}>
                        <div>
                            {h.lines.map((line) => (
                                <div key={line}>{line}</div>
                            ))}
                        </div>
                        <FilterButton $right={h.filter}>
                            <Chevron w={14} sw={1.2} />
                        </FilterButton>
                    </HeaderCell>
                </HeaderSlot>
            ))}

            {rows.map((r, i) => {
                const last = i === rows.length - 1;
                return (
                    <React.Fragment key={r.n}>
                        <RowHead>{r.n}</RowHead>
                        <DataCell $align="left" $last={last}>{r.p}</DataCell>
                        <DataCell $align="left" $last={last}>{r.c}</DataCell>
                        <DataCell $align="left" $last={last}>{r.a}</DataCell>
                        <DataCell $align="center" $last={last}>{r.d}</DataCell>
                        <DataCell $align="center" $last={last}>{r.e}</DataCell>
                        <DataCell $align="right" $last={last}>{r.w}</DataCell>
                        <DataCell $align="right" $last={last} $fill={last ? 'trim' : 'full'} $mr={last ? 0 : 3} $pr={last ? 60 : 57}>{r.g}</DataCell>
                        <DataCell $align="center" $last={last} $ml={last ? 0 : 3} $mr={i === 0 ? 3 : 0}>{r.h}</DataCell>
                        <DataCell $align="center" $last={last} $ml={i === 0 ? 3 : 0}>{r.i}</DataCell>
                        <DataCell $align="center" $last={last} $rule />
                        <DataCell $align="right" $last={last} $pr={56}>{r.k}</DataCell>
                    </React.Fragment>
                );
            })}

            {[14, 15, 16].map((n) => (
                <RowHead key={n}>{n}</RowHead>
            ))}
            <RowHead $fade />

            <SetupShape>SETUP</SetupShape>
        </Sheet>

        <TabBar>
            <NavSlot $w={65}>
                <svg width="14" height="28" viewBox="0 0 14 28">
                    <path d="M12 2L2 14L12 26" fill="none" stroke="#b5b3b1" strokeWidth="2" />
                </svg>
            </NavSlot>
            <NavSlot $w={58}>
                <svg width="14" height="28" viewBox="0 0 14 28">
                    <path d="M2 2L12 14L2 26" fill="none" stroke="#b5b3b1" strokeWidth="2" />
                </svg>
            </NavSlot>
            <NavSlot $w={51}>
                <svg width="25" height="20" viewBox="0 0 25 20">
                    <path d="M0 1.5H25M0 10H25M0 18.5H25" stroke="#3b3a39" strokeWidth="2.2" />
                </svg>
            </NavSlot>
            <SheetTab>Project Tracker</SheetTab>
            <SheetTab $dark>Setup</SheetTab>
            <NavSlot $w={60} $ml={8} $center>
                <svg width="24" height="24" viewBox="0 0 24 24">
                    <path d="M12 0V24M0 12H24" stroke="#3b3a39" strokeWidth="2" />
                </svg>
            </NavSlot>
        </TabBar>

        <StatusBar>
            <span>Calculation Mode: Automatic</span>
            <Slot $ml={36}>Workbook Statistics</Slot>
            <StatusRight>
                <Chevron w={11} color="#7a7874" sw={2.4} />
                <Slot $ml={82}>Give Feedback to Microsoft</Slot>
                <Slot $ml={67}>
                    <svg width="24" height="4" viewBox="0 0 24 4">
                        <rect width="24" height="2.4" y="1" fill="#8a8886" />
                    </svg>
                </Slot>
                <Slot $ml={25}>100%</Slot>
                <Slot $ml={22}>
                    <svg width="24" height="24" viewBox="0 0 24 24">
                        <path d="M12 0V24M0 12H24" stroke="#6b6a68" strokeWidth="2" />
                    </svg>
                </Slot>
            </StatusRight>
        </StatusBar>
    </Page>
);

export default App;
